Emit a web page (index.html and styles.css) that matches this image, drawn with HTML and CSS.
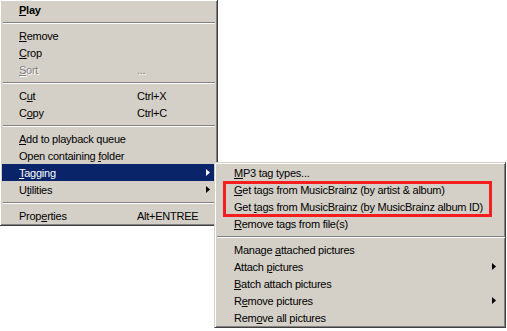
FILE: index.html
```html
<!doctype html>
<html lang='en-US'>
<head>
  <title>Playlist context menu</title>
  <meta charset='utf-8'>
  <link rel="stylesheet" href="styles.css">
</head>
<body>
  <div class='menu main'>
    <div class='item bold'><span class='label'><u>P</u>lay</span></div>
    <div class='sep'></div>
    <div class='item'><span class='label'><u>R</u>emove</span></div>
    <div class='item'><span class='label'><u>C</u>rop</span></div>
    <div class='item off'><span class='label'><u>S</u>ort</span><span class='key'>...</span></div>
    <div class='sep'></div>
    <div class='item'><span class='label'>C<u>u</u>t</span><span class='key'>Ctrl+X</span></div>
    <div class='item'><span class='label'>C<u>o</u>py</span><span class='key'>Ctrl+C</span></div>
    <div class='sep'></div>
    <div class='item'><span class='label'><u>A</u>dd to playback queue</span></div>
    <div class='item'><span class='label'>Open containing <u>f</u>older</span></div>
    <div class='item hot'><span class='label'><u>T</u>agging</span><i class='arrow'></i></div>
    <div class='item'><span class='label'>U<u>t</u>ilities</span><i class='arrow'></i></div>
    <div class='sep'></div>
    <div class='item'><span class='label'>Prop<u>e</u>rties</span><span class='key'>Alt+ENTREE</span></div>
  </div>

  <div class='menu sub'>
    <div class='item'><span class='label'><u>M</u>P3 tag types...</span></div>
    <div class='item'><span class='label'><u>G</u>et tags from MusicBrainz (by artist &amp; album)</span></div>
    <div class='item'><span class='label'>Get <u>t</u>ags from MusicBrainz (by MusicBrainz album ID)</span></div>
    <div class='item'><span class='label'><u>R</u>emove tags from file(s)</span></div>
    <div class='sep'></div>
    <div class='item'><span class='label'>Manage <u>a</u>ttached pictures</span></div>
    <div class='item'><span class='label'>Attach <u>p</u>ictures</span><i class='arrow'></i></div>
    <div class='item'><span class='label'><u>B</u>atch attach pictures</span></div>
    <div class='item'><span class='label'>R<u>e</u>move pictures</span><i class='arrow'></i></div>
    <div class='item'><span class='label'>Rem<u>o</u>ve all pictures</span></div>
  </div>

  <div class='callout'></div>
</body>
</html>
```

FILE: styles.css
```css
*, html { box-sizing: border-box; }
body    { margin: 0; background: #fff; color: #000; font: 11px "Liberation Sans", Arial, sans-serif; letter-spacing: -0.25px; overflow: hidden; }
u       { text-underline-offset: 1px; }

.menu {
  position: absolute;
  background: #d4d0c8;
  border: 1px solid;
  border-color: #d4d0c8 #404040 #404040 #d4d0c8;
  box-shadow: inset 1px 1px #fff, inset -1px -1px #808080;
}
.main { left: -1px; top: -1px; width: 219px; padding: 1px 3px 1px 2px; }
.sub  { left: 214px; top: 162px; width: 292px; padding: 1px 1px 1px 1px; }

.item { display: flex; align-items: center; height: 17px; padding: 1px 4px 0 17px; white-space: nowrap; }
.sub .item { padding-left: 18px; padding-right: 8px; }
.label { flex: 0 0 118px; }
.sub .label { flex: 1 1 auto; }
.key { flex: 1 1 auto; }
.bold { font-weight: bold; }
.off { color: #808080; text-shadow: 1px 1px #fff; }
.hot { background: #0a246a; color: #fff; }

.arrow { margin: -1px 0 0 auto; width: 4px; height: 7px; background: currentColor; clip-path: polygon(0 0, 100% 50%, 0 100%); }

.sep { height: 9px; padding: 4px 0 0 0; margin: 0 -1px 0 1px; }
.sep::before { content: ''; display: block; border-top: 1px solid #808080; border-bottom: 1px solid #fff; }

.callout { position: absolute; left: 223px; top: 181px; width: 269px; height: 36px; border: 3px solid #f51d1d; }
```
